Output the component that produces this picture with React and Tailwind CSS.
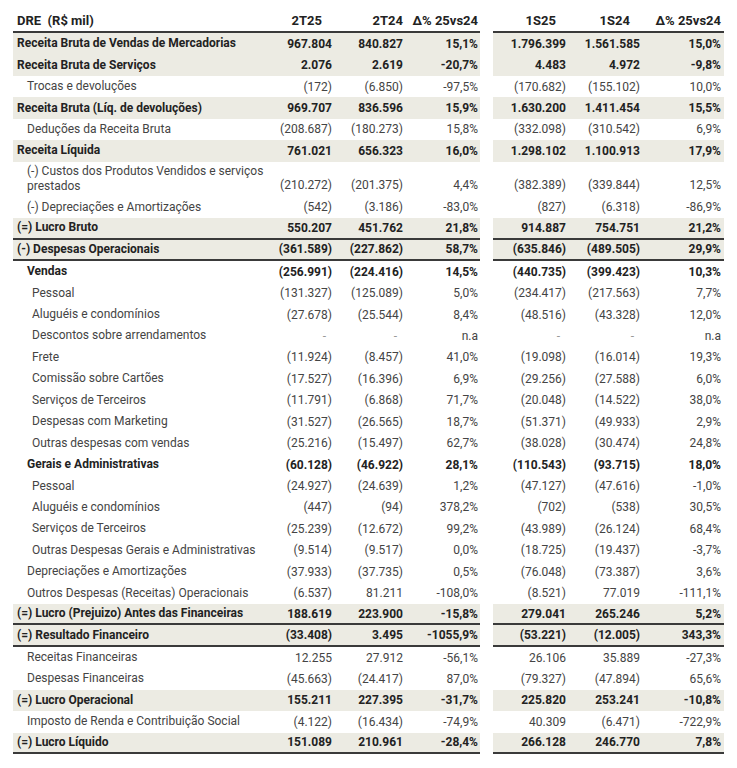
const rows = [
  { label: 'Receita Bruta de Vendas de Mercadorias', v: ['967.804', '840.827', '15,1%', '1.796.399', '1.561.585', '15,0%'], bold: true, shade: true },
  { label: 'Receita Bruta de Serviços', v: ['2.076', '2.619', '-20,7%', '4.483', '4.972', '-9,8%'], bold: true, shade: true },
  { label: 'Trocas e devoluções', v: ['(172)', '(6.850)', '-97,5%', '(170.682)', '(155.102)', '10,0%'], indent: 1 },
  { label: 'Receita Bruta (Líq. de devoluções)', v: ['969.707', '836.596', '15,9%', '1.630.200', '1.411.454', '15,5%'], bold: true, shade: true },
  { label: 'Deduções da Receita Bruta', v: ['(208.687)', '(180.273)', '15,8%', '(332.098)', '(310.542)', '6,9%'], indent: 1 },
  { label: 'Receita Líquida', v: ['761.021', '656.323', '16,0%', '1.298.102', '1.100.913', '17,9%'], bold: true, shade: true },
  { label: '(-) Custos dos Produtos Vendidos e serviços prestados', v: ['(210.272)', '(201.375)', '4,4%', '(382.389)', '(339.844)', '12,5%'], indent: 1, tall: true },
  { label: '(-) Depreciações e Amortizações', v: ['(542)', '(3.186)', '-83,0%', '(827)', '(6.318)', '-86,9%'], indent: 1 },
  { label: '(=) Lucro Bruto', v: ['550.207', '451.762', '21,8%', '914.887', '754.751', '21,2%'], bold: true, shade: true, line: true },
  { label: '(-) Despesas Operacionais', v: ['(361.589)', '(227.862)', '58,7%', '(635.846)', '(489.505)', '29,9%'], bold: true, shade: true, line: true },
  { label: 'Vendas', v: ['(256.991)', '(224.416)', '14,5%', '(440.735)', '(399.423)', '10,3%'], bold: true, indent: 1 },
  { label: 'Pessoal', v: ['(131.327)', '(125.089)', '5,0%', '(234.417)', '(217.563)', '7,7%'], indent: 2 },
  { label: 'Aluguéis e condomínios', v: ['(27.678)', '(25.544)', '8,4%', '(48.516)', '(43.328)', '12,0%'], indent: 2 },
  { label: 'Descontos sobre arrendamentos', v: ['-', '-', 'n.a', '-', '-', 'n.a'], indent: 2, dash: true },
  { label: 'Frete', v: ['(11.924)', '(8.457)', '41,0%', '(19.098)', '(16.014)', '19,3%'], indent: 2 },
  { label: 'Comissão sobre Cartões', v: ['(17.527)', '(16.396)', '6,9%', '(29.256)', '(27.588)', '6,0%'], indent: 2 },
  { label: 'Serviços de Terceiros', v: ['(11.791)', '(6.868)', '71,7%', '(20.048)', '(14.522)', '38,0%'], indent: 2 },
  { label: 'Despesas com Marketing', v: ['(31.527)', '(26.565)', '18,7%', '(51.371)', '(49.933)', '2,9%'], indent: 2 },
  { label: 'Outras despesas com vendas', v: ['(25.216)', '(15.497)', '62,7%', '(38.028)', '(30.474)', '24,8%'], indent: 2 },
  { label: 'Gerais e Administrativas', v: ['(60.128)', '(46.922)', '28,1%', '(110.543)', '(93.715)', '18,0%'], bold: true, indent: 1 },
  { label: 'Pessoal', v: ['(24.927)', '(24.639)', '1,2%', '(47.127)', '(47.616)', '-1,0%'], indent: 2 },
  { label: 'Aluguéis e condomínios', v: ['(447)', '(94)', '378,2%', '(702)', '(538)', '30,5%'], indent: 2 },
  { label: 'Serviços de Terceiros', v: ['(25.239)', '(12.672)', '99,2%', '(43.989)', '(26.124)', '68,4%'], indent: 2 },
  { label: 'Outras Despesas Gerais e Administrativas', v: ['(9.514)', '(9.517)', '0,0%', '(18.725)', '(19.437)', '-3,7%'], indent: 2 },
  { label: 'Depreciações e Amortizações', v: ['(37.933)', '(37.735)', '0,5%', '(76.048)', '(73.387)', '3,6%'], indent: 1 },
  { label: 'Outros Despesas (Receitas) Operacionais', v: ['(6.537)', '81.211', '-108,0%', '(8.521)', '77.019', '-111,1%'], indent: 1 },
  { label: '(=) Lucro (Prejuizo) Antes das Financeiras', v: ['188.619', '223.900', '-15,8%', '279.041', '265.246', '5,2%'], bold: true, shade: true, line: true },
  { label: '(=) Resultado Financeiro', v: ['(33.408)', '3.495', '-1055,9%', '(53.221)', '(12.005)', '343,3%'], bold: true, shade: true, line: true },
  { label: 'Receitas Financeiras', v: ['12.255', '27.912', '-56,1%', '26.106', '35.889', '-27,3%'], indent: 1 },
  { label: 'Despesas Financeiras', v: ['(45.663)', '(24.417)', '87,0%', '(79.327)', '(47.894)', '65,6%'], indent: 1 },
  { label: '(=) Lucro Operacional', v: ['155.211', '227.395', '-31,7%', '225.820', '253.241', '-10,8%'], bold: true, shade: true },
  { label: 'Imposto de Renda e Contribuição Social', v: ['(4.122)', '(16.434)', '-74,9%', '40.309', '(6.471)', '-722,9%'], indent: 1 },
  { label: '(=) Lucro Líquido', v: ['151.089', '210.961', '-28,4%', '266.128', '246.770', '7,8%'], bold: true, shade: true, line: true },
];

const indents = ['pl-[4px]', 'pl-[14px]', 'pl-[19px]'];

function Row({ r }) {
  const h = r.tall ? 'h-[35px] items-end pb-[3px]' : 'h-[21.45px] items-center';
  const bg = r.shade ? 'bg-[#ecebe3]' : 'bg-white';
  const ln = r.line ? 'border-b-2 border-[#3a3a3a]' : '';
  const txt = r.bold ? 'font-bold text-[#222]' : 'text-[#444]';
  const dashCls = r.dash ? 'pr-[6px] text-[#999]' : '';
  return (
    <div className={`flex ${txt}`}>
      <div className={`flex w-[467px] ${h} ${bg} ${ln}`}>
        <div className={`w-[257px] ${indents[r.indent || 0]} leading-[15px] ${r.tall ? '' : 'whitespace-nowrap'}`}>{r.label}</div>
        <div className={`w-[62px] text-right ${dashCls}`}>{r.v[0]}</div>
        <div className={`w-[71px] text-right ${dashCls}`}>{r.v[1]}</div>
        <div className="w-[77px] pr-[2px] text-right">{r.v[2]}</div>
      </div>
      <div className="w-[13px]" />
      <div className={`flex w-[231px] ${h} ${bg} ${ln}`}>
        <div className={`w-[73px] text-right ${dashCls}`}>{r.v[3]}</div>
        <div className={`w-[74px] text-right ${dashCls}`}>{r.v[4]}</div>
        <div className="w-[84px] pr-[3px] text-right">{r.v[5]}</div>
      </div>
    </div>
  );
}

export default function App() {
  return (
    <div className="min-h-screen w-[737px] bg-white pl-[13px] font-['Roboto',sans-serif] text-[12px]">
      <div className="flex font-bold text-[13px] text-[#222]">
        <div className="flex h-[33px] w-[467px] items-end border-b-2 border-[#3a3a3a] pb-[1px]">
          <div className="w-[257px] pl-[4px]">DRE&nbsp; (R$ mil)</div>
          <div className="w-[62px] pr-[10px] text-right">2T25</div>
          <div className="w-[71px] text-right">2T24</div>
          <div className="w-[77px] pr-[2px] text-right">Δ% 25vs24</div>
        </div>
        <div className="w-[13px]" />
        <div className="flex h-[33px] w-[231px] items-end border-b-2 border-[#3a3a3a] pb-[1px]">
          <div className="w-[73px] pr-[10px] text-right">1S25</div>
          <div className="w-[74px] pr-[10px] text-right">1S24</div>
          <div className="w-[84px] pr-[3px] text-right">Δ% 25vs24</div>
        </div>
      </div>
      {rows.map((r, i) => (
        <Row key={i} r={r} />
      ))}
    </div>
  );
}
